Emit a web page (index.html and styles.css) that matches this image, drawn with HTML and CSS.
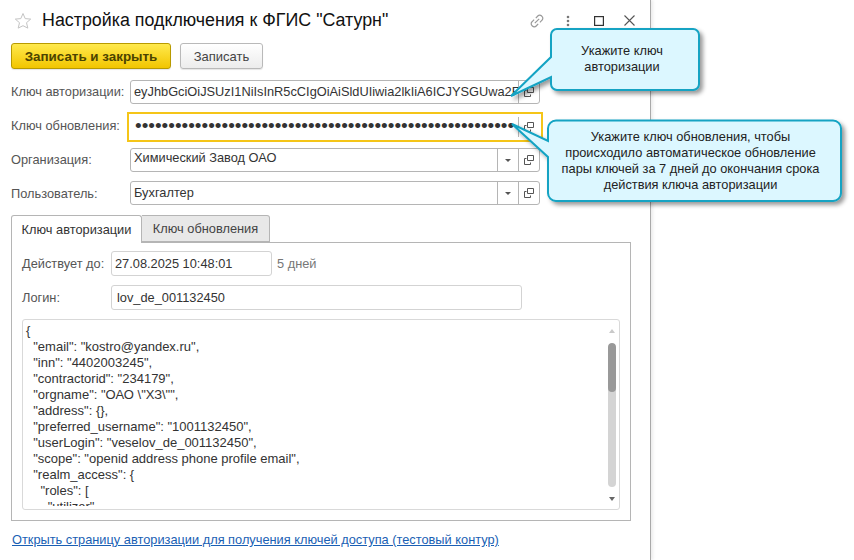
FILE: index.html
```html
<!DOCTYPE html>
<html lang="ru">
<head>
<meta charset="utf-8">
<title>Настройка подключения к ФГИС "Сатурн"</title>
<link rel="stylesheet" href="styles.css">
</head>
<body>
<main class="form">
  <header class="titlebar">
    <svg class="star" width="18" height="18" viewBox="0 0 18 18"><path d="M9 1.500l2.200 5.100 5.500.5-4.200 3.600 1.300 5.400L9 13.700l-4.800 2.400 1.300-5.400L1.300 7.100l5.500-.5z" fill="#fff" stroke="#c4c4c4" stroke-width="1"/></svg>
    <h1 class="title">Настройка подключения к ФГИС "Сатурн"</h1>
    <div class="winicons">
      <svg width="16" height="16" viewBox="0 0 16 16" fill="none" stroke="#999" stroke-width="1.200"><path d="M6.800 5.200l2-2.200a2.600 2.600 0 0 1 3.800 0l.4.4a2.600 2.600 0 0 1 0 3.800l-2.100 2.100"/><path d="M9.200 10.800l-2 2.200a2.600 2.600 0 0 1-3.800 0l-.4-.4a2.600 2.600 0 0 1 0-3.800l2.100-2.100"/><path d="M5.800 10.200l4.400-4.400"/></svg>
      <svg width="4" height="12" viewBox="0 0 4 12" fill="#777"><circle cx="2" cy="2" r="1.300"/><circle cx="2" cy="6" r="1.300"/><circle cx="2" cy="10" r="1.300"/></svg>
      <svg width="10" height="10" viewBox="0 0 10 10" fill="none" stroke="#333" stroke-width="1.200"><rect x=".6" y=".6" width="8.800" height="8.800"/></svg>
      <svg width="11" height="11" viewBox="0 0 11 11" fill="none" stroke="#555" stroke-width="1.100"><path d="M.5.5l10 10M10.500.5l-10 10"/></svg>
    </div>
  </header>

  <div class="toolbar">
    <button class="btn btn-primary">Записать и закрыть</button>
    <button class="btn">Записать</button>
  </div>

  <div class="fields">
    <div class="row">
      <span class="label">Ключ авторизации:</span>
      <div class="field">
        <span class="value clip">eyJhbGciOiJSUzI1NiIsInR5cCIgOiAiSldUIiwia2lkIiA6ICJYSGUwa2FwZXJfZ</span>
        <span class="cell"><svg width="10" height="10" viewBox="0 0 10 10" fill="none" stroke="#555"><path d="M3.500.5h6v5h-6z"/><path d="M2.500 3.500h-2v6h6v-2"/></svg></span>
      </div>
    </div>
    <div class="row row-active">
      <span class="label">Ключ обновления:</span>
      <div class="field field-active">
        <span class="value clip dots">•••••••••••••••••••••••••••••••••••••••••••••••••••••••••</span>
        <span class="cell"><svg width="10" height="10" viewBox="0 0 10 10" fill="none" stroke="#555"><path d="M3.500.5h6v5h-6z"/><path d="M2.500 3.500h-2v6h6v-2"/></svg></span>
      </div>
    </div>
    <div class="row">
      <span class="label">Организация:</span>
      <div class="field">
        <span class="value raised">Химический Завод ОАО</span>
        <span class="cell"><i class="caret"></i></span>
        <span class="cell"><svg width="10" height="10" viewBox="0 0 10 10" fill="none" stroke="#555"><path d="M3.500.5h6v5h-6z"/><path d="M2.500 3.500h-2v6h6v-2"/></svg></span>
      </div>
    </div>
    <div class="row row-last">
      <span class="label">Пользователь:</span>
      <div class="field">
        <span class="value">Бухгалтер</span>
        <span class="cell"><i class="caret"></i></span>
        <span class="cell"><svg width="10" height="10" viewBox="0 0 10 10" fill="none" stroke="#555"><path d="M3.500.5h6v5h-6z"/><path d="M2.500 3.500h-2v6h6v-2"/></svg></span>
      </div>
    </div>
  </div>

  <div class="tabs">
    <span class="tab tab-on">Ключ авторизации</span>
    <span class="tab">Ключ обновления</span>
  </div>
  <section class="panel">
    <div class="prow">
      <span class="plabel">Действует до:</span>
      <span class="input input-date">27.08.2025 10:48:01</span>
      <span class="days">5 дней</span>
    </div>
    <div class="prow">
      <span class="plabel">Логин:</span>
      <span class="input input-login">lov_de_001132450</span>
    </div>
    <div class="json">
<pre class="code">{
  "email": "kostro@yandex.ru",
  "inn": "4402003245",
  "contractorid": "234179",
  "orgname": "ОАО \"ХЗ\"",
  "address": {},
  "preferred_username": "1001132450",
  "userLogin": "veselov_de_001132450",
  "scope": "openid address phone profile email",
  "realm_access": {
    "roles": [
      "utilizer"</pre>
      <div class="scroll">
        <i class="arrow arrow-up"></i>
        <div class="track"><div class="thumb"></div></div>
        <i class="arrow arrow-down"></i>
      </div>
    </div>
  </section>
  <a class="authlink" href="#">Открыть страницу авторизации для получения ключей доступа (тестовый контур)</a>
</main>

<svg class="callouts" width="854" height="560" viewBox="0 0 854 560">
  <defs>
    <filter id="sh" x="-20%" y="-20%" width="140%" height="140%"><feDropShadow dx="3" dy="3" stdDeviation="2" flood-color="#000" flood-opacity=".4"/></filter>
  </defs>
  <path filter="url(#sh)" d="M557 29H693a6 6 0 0 1 6 6V84a6 6 0 0 1-6 6H557a6 6 0 0 1-6-6V77L511 96 551 57V35a6 6 0 0 1 6-6z" fill="#dcf7ff" stroke="#12a3c3" stroke-width="2"/>
  <path filter="url(#sh)" d="M556 120.500H833a8 8 0 0 1 8 8V193a8 8 0 0 1-8 8H556a8 8 0 0 1-8-8V157L512 124 548 141V128.500a8 8 0 0 1 8-8z" fill="#dcf7ff" stroke="#12a3c3" stroke-width="2"/>
</svg>
<p class="tip tip-a">Укажите ключ<br>авторизации</p>
<p class="tip tip-b">Укажите ключ обновления, чтобы<br>происходило автоматическое обновление<br>пары ключей за 7 дней до окончания срока<br>действия ключа авторизации</p>
</body>
</html>
```
FILE: styles.css
```css
* { box-sizing: border-box; }
html, body { margin: 0; padding: 0; background: #fff; }
body { width: 854px; height: 560px; overflow: hidden; position: relative; font-family: "Liberation Sans", Arial, sans-serif; font-size: 12.8px; color: #333; }

.form { width: 651px; height: 560px; border-right: 1px solid #a9a9a9; box-shadow: 2px 0 3px rgba(0,0,0,.08); padding: 0 0 0 11px; display: flex; flex-direction: column; }

.titlebar { height: 43px; display: flex; align-items: center; padding: 0 0 2px 3px; }
.star { flex: none; }
.title { margin: 0 0 0 10px; font-size: 17.850px; font-weight: 400; color: #111; white-space: nowrap; }
.winicons { margin-left: auto; margin-right: 5px; display: grid; grid-template-columns: repeat(4, 31px); justify-items: center; align-items: center; }

.toolbar { display: flex; gap: 9px; height: 26px; }
.btn { font: inherit; font-size: 13px; height: 26px; border-radius: 3px; border: 1px solid #b9b9b9; background: linear-gradient(#fff, #ececec); color: #444; padding: 0; width: 83px; box-shadow: 0 1px 1px rgba(0,0,0,.1); }
.btn-primary { width: 160px; font-size: 13.400px; font-weight: 700; color: #4b4300; border-color: #b89a00; background: linear-gradient(#ffe94d, #f2c500); }

.fields { margin-top: 11px; display: flex; flex-direction: column; }
.row { display: flex; align-items: center; height: 24px; margin-bottom: 9px; }
.row-active { height: 30px; margin-top: -1px; margin-bottom: 6px; }
.label { width: 119px; flex: none; color: #555; white-space: nowrap; padding-bottom: 2px; }
.row-active .label { padding-bottom: 4px; }
.row-last .label { padding-bottom: 0; }
.field { width: 410px; height: 100%; display: flex; align-items: stretch; border: 1px solid #b5b5b5; border-radius: 3px; background: #fff; }
.field-active { width: 416px; margin-left: -3px; border: 2px solid #f5c518; border-radius: 0; padding: 0 0 0 3px; }
.field-active .cell { margin: 3px 0; width: 23px; padding-right: 2px; }
.value { flex: 1; min-width: 0; padding: 0 0 0 3px; line-height: 22px; white-space: nowrap; color: #333; }
.raised { line-height: 18px; }
.clip { overflow: hidden; }
.dots { font-size: 19px; line-height: 24px; color: #333; }
.cell { flex: none; width: 21px; border-left: 1px solid #b5b5b5; display: flex; align-items: center; justify-content: center; }
.caret { width: 0; height: 0; border-left: 3px solid transparent; border-right: 3px solid transparent; border-top: 3.500px solid #555; }

.tabs { display: flex; margin-top: 1px; height: 28px; position: relative; z-index: 1; margin-bottom: -1px; }
.tab { height: 27px; padding: 0; width: 128px; display: flex; align-items: center; justify-content: center; border: 1px solid #b5b5b5; border-left: 0; border-radius: 0 3px 0 0; background: #e8e8e8; color: #444; }
.tab-on { width: 131px; height: 28px; background: #fff; border-left: 1px solid #b5b5b5; border-bottom: 0; border-radius: 3px 3px 0 0; color: #333; }

.panel { width: 620px; height: 279px; border: 1px solid #b5b5b5; padding: 8px 10px 10px 10px; display: flex; flex-direction: column; }
.prow { display: flex; align-items: center; height: 25px; margin-bottom: 9px; }
.plabel { width: 89px; flex: none; color: #555; white-space: nowrap; }
.input { height: 25px; border: 1px solid #d3d3d3; border-radius: 3px; line-height: 23px; padding-left: 3px; color: #333; white-space: nowrap; }
.input-date { width: 161px; }
.input-login { width: 411px; padding-left: 5px; }
.days { margin-left: 5px; color: #777; }

.json { width: 598px; height: 191px; border: 1px solid #d9d9d9; border-radius: 3px; position: relative; overflow: hidden; }
.code { margin: 0; padding: 3px 0 0 3px; font: 13px/16px "Liberation Sans", Arial, sans-serif; color: #333; height: 186px; overflow: hidden; }
.scroll { position: absolute; top: 9px; right: 3px; width: 8px; height: 172px; display: flex; flex-direction: column; align-items: center; }
.arrow { width: 0; height: 0; border-left: 3px solid transparent; border-right: 3px solid transparent; flex: none; }
.arrow-up { border-bottom: 4px solid #c9c9c9; }
.arrow-down { border-top: 4px solid #666; }
.track { flex: 1; width: 8px; margin: 10px 0; background: #d4d4d4; border-radius: 4px; overflow: hidden; }
.thumb { height: 49px; background: #999; border-radius: 4px; }

.authlink { margin-top: 11px; width: max-content; margin-left: 1px; color: #1a5fb4; text-decoration: underline; }

.callouts { position: absolute; left: 0; top: 0; pointer-events: none; }
.tip { position: absolute; margin: 0; color: #222; font-size: 12.800px; text-align: center; line-height: 16px; }
.tip-a { left: 548px; top: 43px; width: 148px; }
.tip-b { left: 544px; top: 129px; width: 293px; }
```
